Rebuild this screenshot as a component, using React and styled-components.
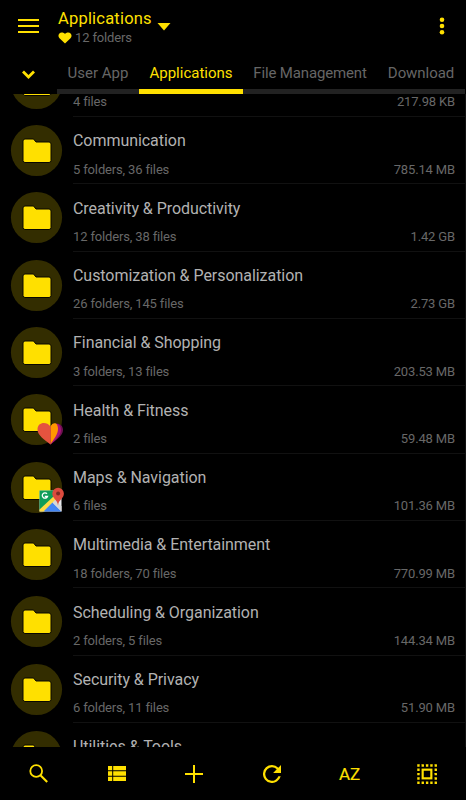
import React from "react";
import styled, { createGlobalStyle } from "styled-components";

const YELLOW = "#ffe000";

const GlobalStyle = createGlobalStyle`
  * { box-sizing: border-box; }
  body { margin: 0; background: #000; }
`;

const Screen = styled.div`
  width: 466px;
  height: 800px;
  overflow: hidden;
  display: flex;
  flex-direction: column;
  background: #000;
  color: #b2b2b2;
  font-family: Roboto, "Liberation Sans", sans-serif;
  white-space: nowrap;
`;

const Header = styled.header`
  height: 56px;
  flex: none;
  display: flex;
  align-items: flex-start;
  color: ${YELLOW};
`;

const MenuIcon = styled.svg`
  width: 21px;
  height: 15px;
  margin: 18px 19px 0 18px;
`;

const Heading = styled.div`
  display: flex;
  flex-direction: column;
  padding-top: 8px;
`;

const Title = styled.div`
  display: flex;
  align-items: flex-start;
  height: 20px;
  font-size: 16.5px;
  line-height: 21px;
  letter-spacing: 0.2px;
`;

const Caret = styled.svg`
  width: 14px;
  height: 8px;
  margin: 15px 0 0 5px;
`;

const Subtitle = styled.div`
  display: flex;
  align-items: center;
  gap: 3px;
  height: 19px;
  font-size: 13px;
  letter-spacing: -0.15px;
  color: #686868;
`;

const Heart = styled.svg`
  width: 14px;
  height: 12px;
`;

const MoreIcon = styled.svg`
  width: 6px;
  height: 18px;
  margin: 17px 21px 0 auto;
`;

const TabBar = styled.nav`
  height: 38px;
  flex: none;
  display: flex;
`;

const Expand = styled.div`
  width: 57px;
  flex: none;
  color: ${YELLOW};
  padding: 14px 0 0 22px;
  svg { display: block; }
`;

const Tab = styled.div`
  flex: none;
  width: ${(p) => p.$width}px;
  padding-top: 7px;
  text-align: center;
  font-size: 15px;
  line-height: 20px;
  letter-spacing: ${(p) => p.$spacing || 0}px;
  color: ${(p) => (p.$active ? YELLOW : "#666")};
  border-bottom: 5px solid ${(p) => (p.$active ? YELLOW : "#222")};
`;

const List = styled.main`
  height: 653px;
  flex: none;
  overflow: hidden;
  border-right: 1px solid #111;
`;

const Rows = styled.div`
  margin-top: -44.2px;
`;

const Row = styled.div`
  height: 67.33px;
  padding-left: 11px;
  display: flex;
  align-items: flex-start;
  gap: 11px;
`;

const FolderBadge = styled.svg`
  width: 51px;
  height: 51px;
  flex: none;
  overflow: visible;
  margin-top: 7.8px;
`;

const RowBody = styled.div`
  flex: 1;
  height: 100%;
  padding: 14.3px 10px 0 0;
  border-bottom: 1px solid #111;
`;

const Name = styled.div`
  font-size: 16px;
  line-height: 20px;
  letter-spacing: -0.05px;
  color: #b2b2b2;
`;

const Meta = styled.div`
  margin-top: 9.3px;
  display: flex;
  justify-content: space-between;
  font-size: 13px;
  line-height: 17px;
  letter-spacing: -0.15px;
  color: #686868;
`;

const Toolbar = styled.footer`
  flex: 1;
  display: flex;
  color: ${YELLOW};
`;

const Action = styled.div`
  flex: 1;
  display: flex;
  align-items: center;
  justify-content: center;
  font-size: 17px;
  -webkit-text-stroke: 0.15px currentColor;
`;

const rows = [
  ["", "4 files", "217.98 KB"],
  ["Communication", "5 folders, 36 files", "785.14 MB"],
  ["Creativity & Productivity", "12 folders, 38 files", "1.42 GB"],
  ["Customization & Personalization", "26 folders, 145 files", "2.73 GB"],
  ["Financial & Shopping", "3 folders, 13 files", "203.53 MB"],
  ["Health & Fitness", "2 files", "59.48 MB", "fit"],
  ["Maps & Navigation", "6 files", "101.36 MB", "maps"],
  ["Multimedia & Entertainment", "18 folders, 70 files", "770.99 MB"],
  ["Scheduling & Organization", "2 folders, 5 files", "144.34 MB"],
  ["Security & Privacy", "6 folders, 11 files", "51.90 MB"],
  ["Utilities & Tools", "", ""],
];

const FitLogo = () => (
  <g transform="translate(26.5 28.5)">
    <path d="M13 4C16 0 25.5-.5 25.500 7.500C25.500 13 19 17 13 22Z" fill="#6d1050" />
    <path d="M13 4C16 0 23.500-.5 23.500 7.500C23.500 13 18 17 13 22Z" fill="#a8127a" />
    <path d="M13 4C15-.5 20.500-1 20.500 6.500C20.500 12 16 17 13 22Z" fill="#ff9800" />
    <path d="M13 4C9-1.500 0-.5 0 7C0 13 7 17 13 22Z" fill="#e5533f" />
  </g>
);

const MapsLogo = () => (
  <g transform="translate(28.500 25.500)">
    <path d="M0 3H22V24H0Z" fill="#e8eaed" />
    <path d="M0 3H18L14 11L0 23Z" fill="#109d58" />
    <path d="M0 22L14 9L17 12L5 24H0Z" fill="#ffda44" />
    <path d="M4 24L13 15L22 24Z" fill="#4285f4" />
    <path d="M13 15L16 12L22 19V24Z" fill="#d7d7d7" />
    <path d="M7.500 6.200A2.700 2.700 0 1 0 8 9H5.300" fill="none" stroke="#fff" strokeWidth="1.300" />
    <path d="M18.500 18C18 12 12.800 11 12.800 6A5.800 5.800 0 0 1 24.400 6C24.400 11 19 12 18.500 18Z" fill="#dc4b3e" />
    <circle cx="18.600" cy="6" r="2" fill="#7d2924" />
  </g>
);

const Folder = ({ badge }) => (
  <FolderBadge viewBox="0 0 51 51">
    <circle cx="25.500" cy="25.500" r="25.600" fill="#332d00" />
    <path
      d="M14 14H22.500L25 17H38Q40 17 40 19V35.500Q40 37.500 38 37.500H14Q12 37.500 12 35.500V16Q12 14 14 14Z"
      fill={YELLOW}
      stroke="#080700"
      strokeWidth="1"
    />
    {badge === "fit" && <FitLogo />}
    {badge === "maps" && <MapsLogo />}
  </FolderBadge>
);

const SearchIcon = () => (
  <svg width="20" height="20" viewBox="0.3 0.5 20 20" fill="none" stroke="currentColor">
    <circle cx="7.500" cy="7.500" r="5.900" strokeWidth="1.800" />
    <path d="M12 12L18.500 18.500" strokeWidth="2.100" />
  </svg>
);

const ListIcon = () => (
  <svg width="18" height="15" viewBox="0 0 18 15" fill="currentColor">
    <path d="M0 0H4.200V4.300H0ZM5.200 0H18V4.300H5.200ZM0 5.300H4.200V9.700H0ZM5.200 5.300H18V9.700H5.200ZM0 10.700H4.200V15H0ZM5.200 10.700H18V15H5.200Z" />
  </svg>
);

const PlusIcon = () => (
  <svg width="18" height="18" viewBox="0 0 18 18" fill="currentColor">
    <path d="M8 0H10V8H18V10H10V18H8V10H0V8H8Z" />
  </svg>
);

const RefreshIcon = () => (
  <svg width="18" height="18" viewBox="4 4 16 16" fill="currentColor">
    <path d="M17.650 6.350A7.960 7.960 0 0 0 12 4a8 8 0 1 0 7.730 10h-2.080A6 6 0 1 1 12 6c1.660 0 3.140.690 4.220 1.780L13 11h7V4l-2.350 2.350z" />
  </svg>
);

const dots = [3, 7, 11, 15, 19];

const SelectAllIcon = () => (
  <svg width="26" height="26" viewBox="0 0 24 24" fill="currentColor">
    <rect x="8" y="8" width="8" height="8" fill="none" stroke="currentColor" strokeWidth="2" />
    {dots.flatMap((x) =>
      dots
        .filter((y) => x === 3 || x === 19 || y === 3 || y === 19)
        .map((y) => <rect key={`${x}-${y}`} x={x} y={y} width="2.200" height="2.200" rx="0.200" />)
    )}
  </svg>
);

export default function App() {
  return (
    <Screen>
      <GlobalStyle />
      <Header>
        <MenuIcon viewBox="0 0 21 15" fill="currentColor">
          <path d="M0 1H21V3H0ZM0 7H21V9H0ZM0 13H21V15H0Z" />
        </MenuIcon>
        <Heading>
          <Title>
            Applications
            <Caret viewBox="0 0 14 8" fill="currentColor">
              <path d="M0.500 0H13.500L7 7.500Z" />
            </Caret>
          </Title>
          <Subtitle>
            <Heart viewBox="0 0 14 12" fill={YELLOW}>
              <path d="M7 11.500L1.500 6.200C-1.500 3 2.500-2 7 1.800C11.500-2 15.500 3 12.500 6.200Z" />
            </Heart>
            12 folders
          </Subtitle>
        </Heading>
        <MoreIcon viewBox="0 0 6 18" fill="currentColor">
          <circle cx="3" cy="2.700" r="2.300" />
          <circle cx="3" cy="9" r="2.300" />
          <circle cx="3" cy="15.300" r="2.300" />
        </MoreIcon>
      </Header>
      <TabBar>
        <Expand>
          <svg width="13" height="10" viewBox="0 0 13 10" fill="none" stroke="currentColor" strokeWidth="2.800">
            <path d="M1 1.500L6.500 7L12 1.500" />
          </svg>
        </Expand>
        <Tab $width={82}>User App</Tab>
        <Tab $width={104} $active>Applications</Tab>
        <Tab $width={134} $spacing={-0.15}>File Management</Tab>
        <Tab $width={88} $spacing={-0.06}>Download</Tab>
      </TabBar>
      <List>
        <Rows>
          {rows.map(([name, count, size, badge], i) => (
            <Row key={i}>
              <Folder badge={badge} />
              <RowBody>
                <Name>{name || "\u00a0"}</Name>
                <Meta>
                  <span>{count}</span>
                  <span>{size}</span>
                </Meta>
              </RowBody>
            </Row>
          ))}
        </Rows>
      </List>
      <Toolbar>
        <Action><SearchIcon /></Action>
        <Action><ListIcon /></Action>
        <Action><PlusIcon /></Action>
        <Action><RefreshIcon /></Action>
        <Action>AZ</Action>
        <Action><SelectAllIcon /></Action>
      </Toolbar>
    </Screen>
  );
}
